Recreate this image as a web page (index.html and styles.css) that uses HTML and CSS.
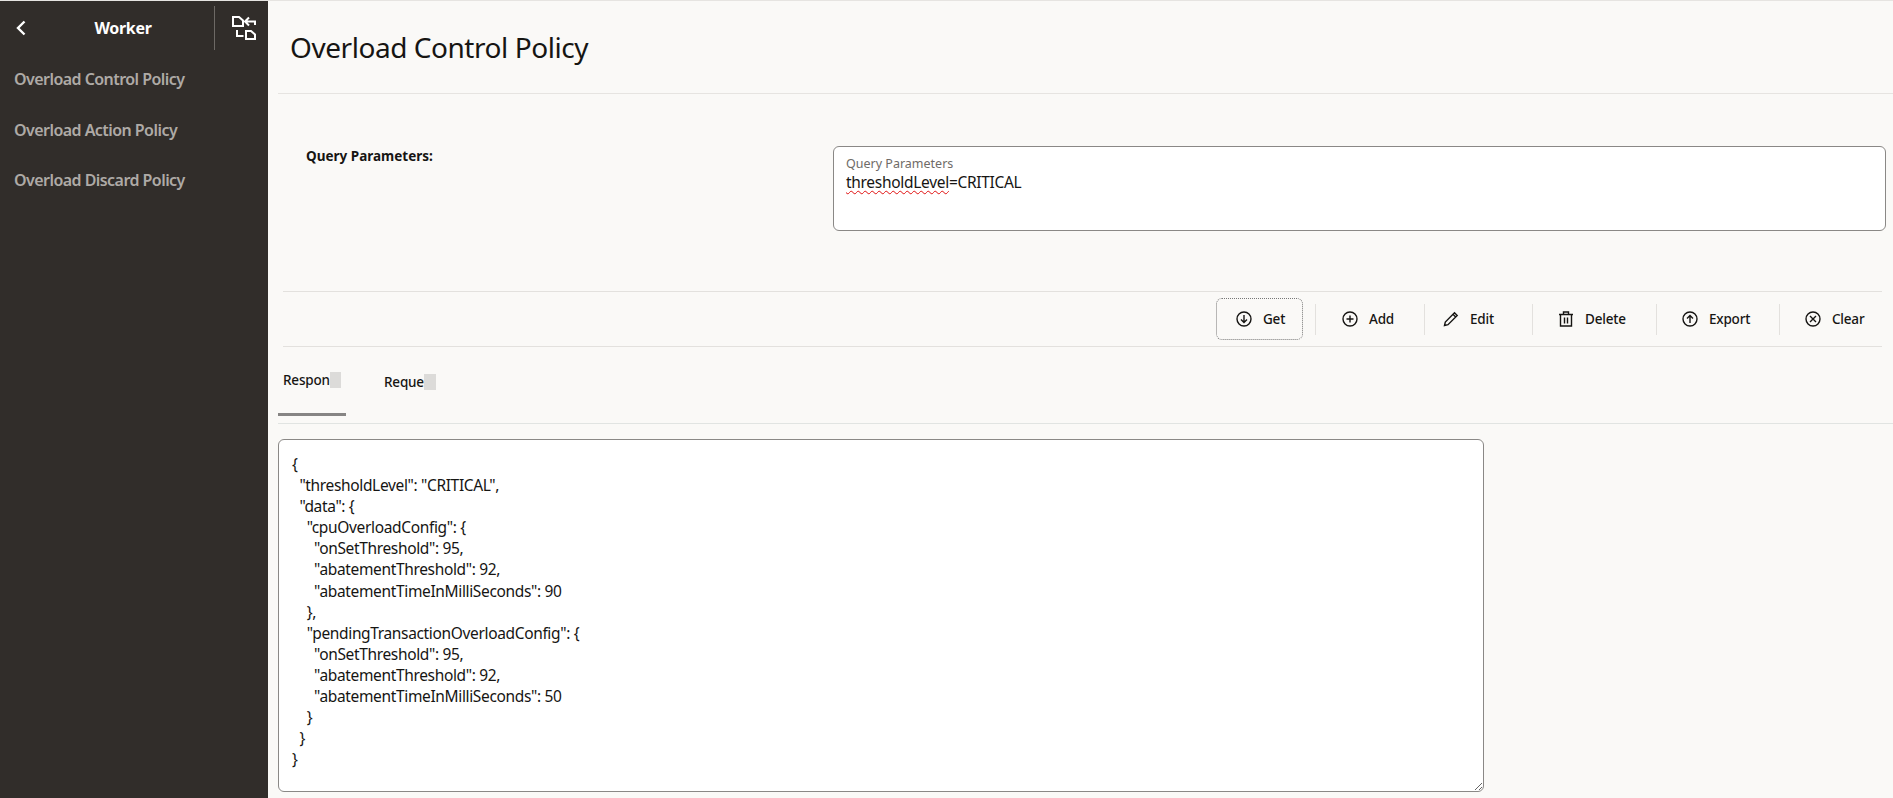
FILE: index.html
```html
<!DOCTYPE html>
<html lang="en">
<head>
<meta charset="utf-8">
<title>Overload Control Policy</title>
<link rel="stylesheet" href="styles.css">
</head>
<body>
<div class="app">
  <aside class="sidebar">
    <div class="side-head">
      <svg class="chevron" viewBox="0 0 10 16" width="10" height="16"><path d="M8.5 1.5 2 8l6.5 6.5" fill="none" stroke="#fff" stroke-width="2.4"/></svg>
      <div class="side-title">Worker</div>
      <div class="side-div"></div>
      <svg class="switch" viewBox="0 0 24 24" width="24" height="24"><path d="M1 1h6l4 3.5V10H1z M13 5.5h10V9 M17 1.5l-4 4 4 4 M5 14v6h6.500 M14 15h5l4 3.500V23h-9z" fill="none" stroke="#fff" stroke-width="2"/></svg>
    </div>
    <nav class="side-nav">
      <a class="nav-item">Overload Control Policy</a>
      <a class="nav-item">Overload Action Policy</a>
      <a class="nav-item">Overload Discard Policy</a>
    </nav>
  </aside>
  <main class="content">
    <header class="page-head"><h1 class="page-title">Overload Control Policy</h1></header>
    <section class="form-row">
      <label class="form-label">Query Parameters:</label>
      <div class="field">
        <div class="field-label">Query Parameters</div>
        <div class="field-value"><span class="misspelt">thresholdLevel</span>=CRITICAL</div>
      </div>
    </section>
    <div class="toolbar">
      <button class="tool tool-get">
        <svg class="ico" viewBox="0 0 16 16"><circle cx="8" cy="8" r="7"/><path d="M8 4v7.500M5 8.500l3 3 3-3"/></svg>Get
      </button>
      <button class="tool tool-add">
        <svg class="ico" viewBox="0 0 16 16"><circle cx="8" cy="8" r="7"/><path d="M8 4.500v7M4.500 8h7"/></svg>Add
      </button>
      <button class="tool tool-edit">
        <svg class="ico" viewBox="0 0 16 16"><path d="M1.500 14.500l.8-3.500L11.500 1.800l2.700 2.700L5 13.700z M10 3.300l2.700 2.700"/></svg>Edit
      </button>
      <button class="tool tool-delete">
        <svg class="ico" viewBox="0 0 16 16"><path d="M1 3.500h14 M5.500 3.500V1h5v2.500 M2.500 3.500V15h11V3.500 M6.500 6.500v6 M9.500 6.500v6"/></svg>Delete
      </button>
      <button class="tool tool-export">
        <svg class="ico" viewBox="0 0 16 16"><circle cx="8" cy="8" r="7"/><path d="M8 12V4.500M5 7.500l3-3 3 3"/></svg>Export
      </button>
      <button class="tool tool-clear">
        <svg class="ico" viewBox="0 0 16 16"><circle cx="8" cy="8" r="7"/><path d="M5 5l6 6M11 5l-6 6"/></svg>Clear
      </button>
    </div>
    <div class="tabs">
      <div class="tab tab-active">Respon<span class="mask"></span></div>
      <div class="tab">Reque<span class="mask"></span></div>
    </div>
    <textarea class="response" readonly spellcheck="false">{
  "thresholdLevel": "CRITICAL",
  "data": {
    "cpuOverloadConfig": {
      "onSetThreshold": 95,
      "abatementThreshold": 92,
      "abatementTimeInMilliSeconds": 90
    },
    "pendingTransactionOverloadConfig": {
      "onSetThreshold": 95,
      "abatementThreshold": 92,
      "abatementTimeInMilliSeconds": 50
    }
  }
}</textarea>
  </main>
</div>
</body>
</html>
```
FILE: styles.css
```css
* { box-sizing: border-box; }
html, body { margin: 0; height: 100%; overflow: hidden; }
body { font-family: "Noto Sans", "Open Sans", sans-serif; color: #161513; background: #faf9f7; }
.app { display: flex; height: 798px; border-top: 1px solid #e6e4e1; }
.sidebar { width: 268px; flex: none; background: #312d2a; color: #fff; }
.side-head { display: flex; align-items: center; height: 53px; padding-left: 16px; }
.chevron { flex: none; }
.side-title { flex: 1; padding-left: 6px; text-align: center; font-size: 16px; font-weight: 700; letter-spacing: -.3px; }
.side-div { flex: none; width: 1px; height: 44px; background: #6d6965; }
.switch { flex: none; margin: 0 12px 0 17px; }
.side-nav { display: flex; flex-direction: column; }
.nav-item { display: flex; align-items: center; height: 50.500px; padding-left: 14px; font-size: 16px; font-weight: 600; color: #aeaaa6; letter-spacing: -.55px; }
.content { flex: 1; min-width: 0; }
.page-head { margin-left: 10px; height: 93px; display: flex; align-items: center; border-bottom: 1px solid #e6e4e1; padding-left: 12px; padding-bottom: 1px; }
.page-title { margin: 0; font-size: 28px; font-weight: 400; letter-spacing: -.45px; }
.form-row { display: flex; padding: 52px 7px 0 38px; height: 197px; }
.form-label { flex: none; width: 527px; padding-top: 1px; font-size: 13.500px; font-weight: 700; line-height: 18px; margin-top: 0; }
.field { flex: 1; height: 85px; background: #fff; border: 1px solid #8a8886; border-radius: 6px; padding: 8px 12px; }
.field-label { font-size: 12.500px; line-height: 17px; color: #6f6b67; }
.field-value { font-size: 15.500px; line-height: 21px; letter-spacing: -.3px; }
.misspelt { text-decoration: underline wavy #e01010 1px; text-underline-offset: 2px; }
.toolbar { display: flex; justify-content: flex-end; align-items: center; margin: 0 11px 0 15px; height: 56px; border-top: 1px solid #e3e1de; border-bottom: 1px solid #e3e1de; }
.tool { display: flex; align-items: center; gap: 11px; height: 31px; padding: 0 0 0 26px; background: none; border: 0; border-left: 1px solid #e3e1de; font: inherit; font-size: 13.500px; font-weight: 500; color: #161513; letter-spacing: -.2px; }
.ico { width: 16px; height: 16px; flex: none; fill: none; stroke: #161513; stroke-width: 1.400; }
.tool-get { width: 87px; height: 42px; margin-right: 12px; padding-left: 19px; border: 1px dotted #777; border-radius: 6px; }
.tool-add { width: 109px; }
.tool-edit { width: 108px; padding-left: 18px; }
.tool-delete { width: 124px; padding-left: 25px; }
.tool-export { width: 123px; padding-left: 25px; }
.tool-clear { width: 103px; padding-left: 25px; }
.tabs { display: flex; margin-left: 10px; height: 77px; border-bottom: 1px solid #e1e4e2; }
.tab { display: flex; align-items: center; height: 69px; padding: 0 5px 0 5px; font-size: 13.500px; font-weight: 500; letter-spacing: -.2px; margin-right: 33px; }
.tab-active { width: 68px; border-bottom: 3px solid #868584; margin-right: 33px; }
.mask { width: 12px; height: 16px; background: #dcdbd9; }
.response { display: block; width: 1206px; height: 353px; margin: 15px 0 0 10px; padding: 14px 13px; background: #fff; border: 1px solid #8a8886; border-radius: 6px; font-family: inherit; font-size: 15.500px; line-height: 21.100px; letter-spacing: -.35px; color: #161513; outline: none; resize: both; overflow: hidden; }
```
